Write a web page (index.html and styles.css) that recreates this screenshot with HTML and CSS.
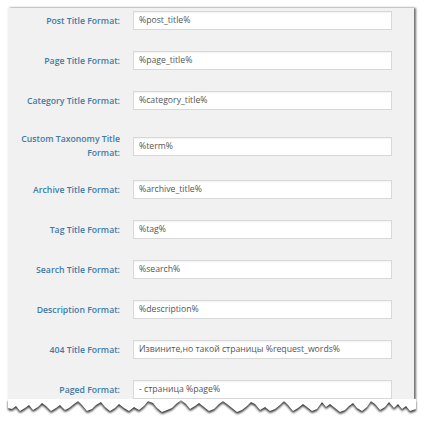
FILE: index.html
```html
<!DOCTYPE html>
<html lang="en">
<head>
    <meta charset="UTF-8">
    <meta name="viewport" content="width=device-width, initial-scale=1.0">
    <title>Title Formats</title>
    <link rel="stylesheet" href="styles.css">
</head>
<body>
    <div class="sheet">
        <div class="panel">
            <div class="row">
                <label class="label">Post Title Format:</label>
                <div class="field">%post_title%</div>
            </div>
            <div class="row">
                <label class="label">Page Title Format:</label>
                <div class="field">%page_title%</div>
            </div>
            <div class="row">
                <label class="label">Category Title Format:</label>
                <div class="field">%category_title%</div>
            </div>
            <div class="row tall">
                <label class="label">Custom Taxonomy Title Format:</label>
                <div class="field">%term%</div>
            </div>
            <div class="row">
                <label class="label">Archive Title Format:</label>
                <div class="field">%archive_title%</div>
            </div>
            <div class="row">
                <label class="label">Tag Title Format:</label>
                <div class="field">%tag%</div>
            </div>
            <div class="row">
                <label class="label">Search Title Format:</label>
                <div class="field">%search%</div>
            </div>
            <div class="row">
                <label class="label">Description Format:</label>
                <div class="field">%description%</div>
            </div>
            <div class="row">
                <label class="label">404 Title Format:</label>
                <div class="field">Извините,но такой страницы %request_words%</div>
            </div>
            <div class="row">
                <label class="label">Paged Format:</label>
                <div class="field">- страница %page%</div>
            </div>
        </div>
        <svg class="torn" width="408" height="22" viewBox="0 0 408 22">
            <polygon fill="#fff" points="0,0 408,0 408,10 402,12 398,7 394,10 390,5 386,9 381,3 377,8 372,11 367,5 363,2 359,8 354,12 349,9 345,4 341,7 337,11 332,13 327,9 322,5 318,8 314,3 309,10 304,12 299,8 295,5 290,9 285,12 280,6 276,2 272,6 267,10 262,12 257,8 252,11 247,5 243,3 239,7 234,11 229,13 224,9 219,5 215,2 211,5 206,10 201,12 196,8 191,4 187,7 182,10 178,5 173,1 168,5 164,9 159,11 154,13 149,9 145,4 140,2 136,7 131,11 126,8 121,12 116,9 111,5 107,9 102,12 97,8 93,3 88,6 84,10 79,12 74,6 70,2 66,5 61,9 57,11 52,6 48,9 43,12 38,7 34,4 30,8 25,11 21,6 17,9 12,12 8,7 4,10 0,9"/>
        </svg>
    </div>
</body>
</html>
```

FILE: styles.css
```css
body {
    margin: 0;
    background: #fff;
    font-family: "Open Sans", Arial, sans-serif;
}
.sheet {
    width: 408px;
    margin: 8px 0 0 8px;
}
.panel {
    width: 406px;
    height: 392px;
    overflow: hidden;
    background: #f1f1f1;
    box-shadow: 2px 0 2px rgba(0, 0, 0, 0.55), 0 -1px 2px rgba(0, 0, 0, 0.08);
}
.row {
    display: grid;
    grid-template-columns: 112px 259px;
    column-gap: 13px;
    align-items: center;
    padding: 3px 0 18px;
}
.row.tall {
    padding: 4px 0 17px;
}
.label {
    text-align: right;
    font-size: 8.7px;
    font-weight: 600;
    line-height: 14px;
    color: #427aa6;
}
.field {
    box-sizing: border-box;
    height: 19px;
    padding: 0 5px;
    background: #fff;
    border: 1px solid #d8d8d8;
    box-shadow: inset 0 1px 1px rgba(0, 0, 0, 0.05);
    font-size: 8.7px;
    line-height: 17px;
    color: #555;
    white-space: nowrap;
    overflow: hidden;
}
.torn {
    display: block;
    margin-top: -1px;
    filter: drop-shadow(0 2px 1.2px rgba(0, 0, 0, 0.8));
}
```
